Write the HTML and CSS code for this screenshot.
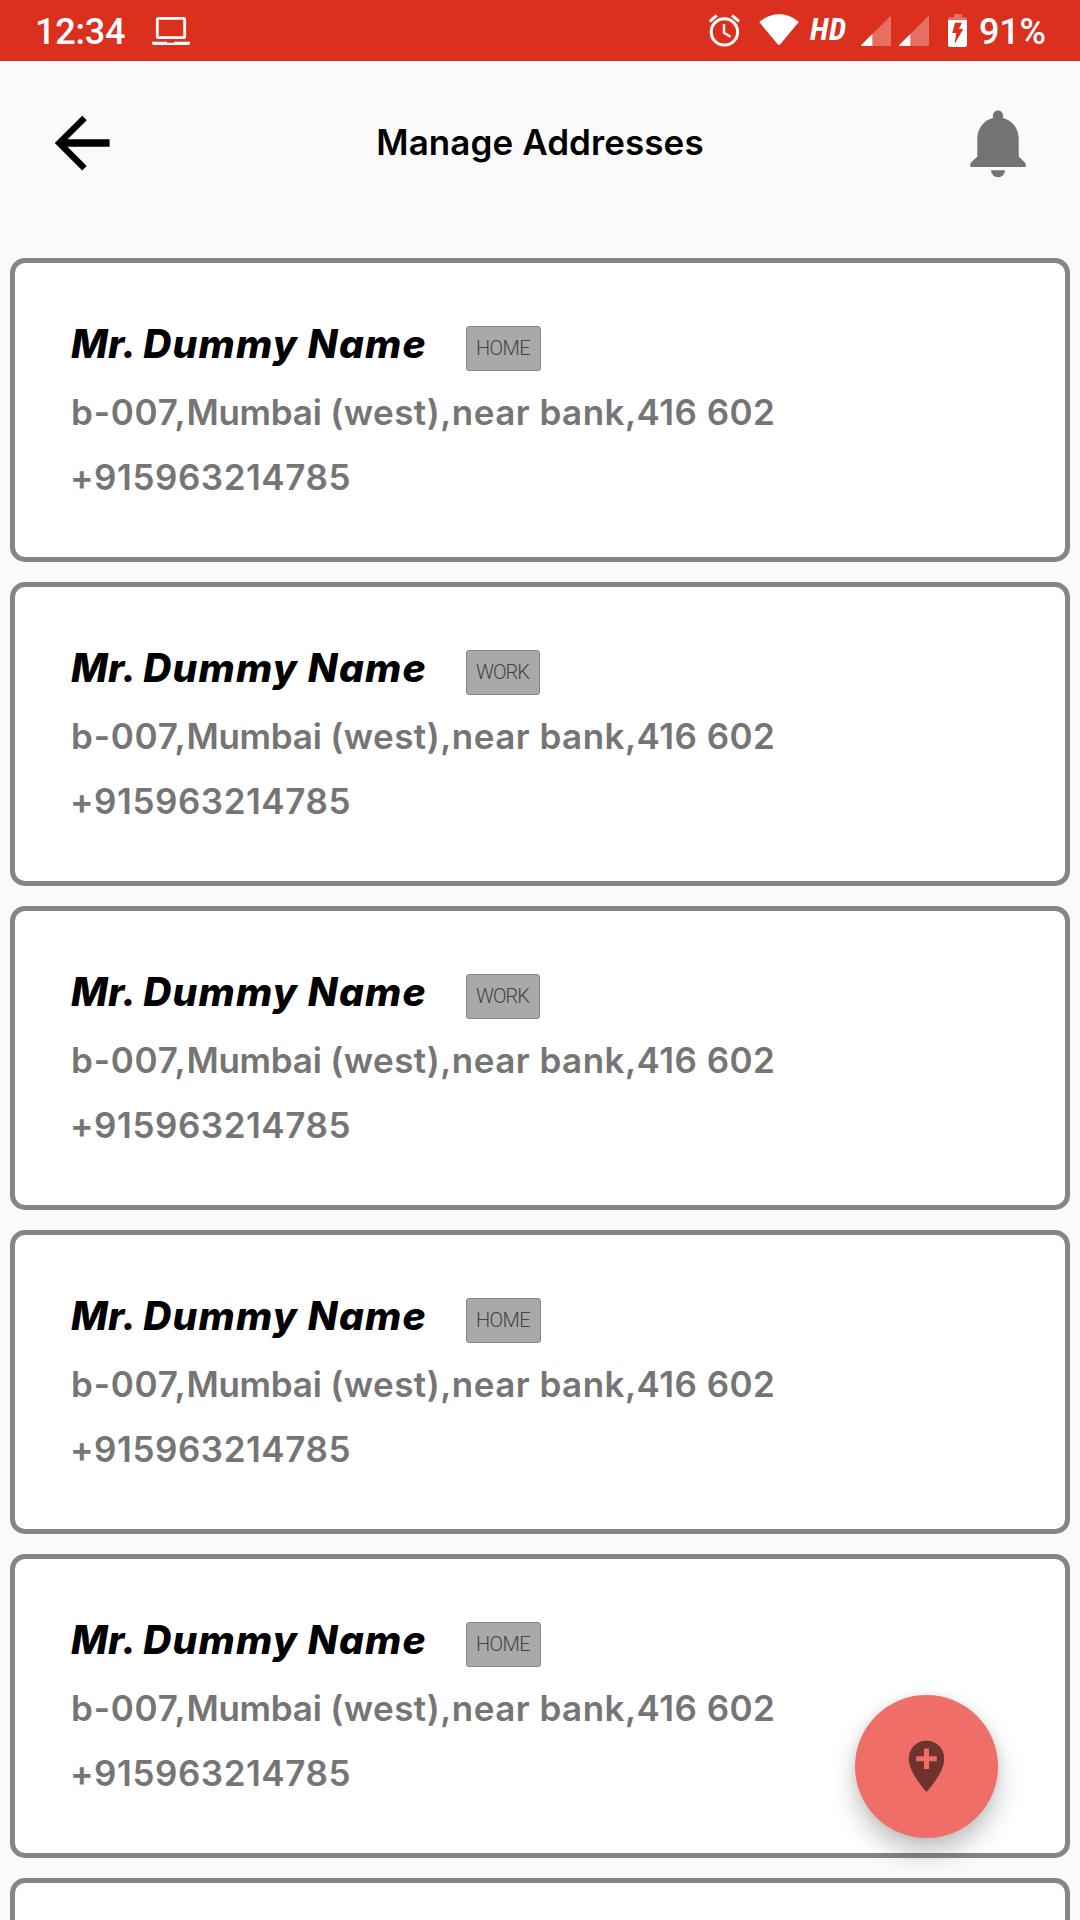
FILE: index.html
```html
<!DOCTYPE html>
<html lang="en">
<head>
<meta charset="utf-8">
<title>Manage Addresses</title>
<link rel="stylesheet" href="styles.css">
</head>
<body>
<div class="status-bar">
  <span class="clock">12:34</span>
  <svg class="laptop" viewBox="152 14 38 34" width="38" height="34"><rect x="157.3" y="18.3" width="27.4" height="19.4" rx="1.5" fill="none" stroke="#fff" stroke-width="2.8"/><path d="M152 41.7h15v1h7v-1h16v1.3q0 2-2 2h-34q-2 0-2-2z" fill="#fff"/></svg>
  <div class="indicators">
    <svg class="alarm" viewBox="708 13 34 35" width="34" height="35" fill="none" stroke="#fff"><circle cx="724.4" cy="31.9" r="13.2" stroke-width="3"/><path d="M724 24v8.8l6.6 4" stroke-width="2.4"/><path d="M709.8 21.3l7-5.9M739 21.3l-7-5.9" stroke-width="3"/></svg>
    <svg class="wifi" viewBox="759 13 40 35" width="40" height="35"><path d="M759.2 22.1C770.5 11.500 787.500 11.500 798.800 22.100L780.500 44Q779 45.800 777.500 44Z" fill="#fff"/></svg>
    <span class="hd">HD</span>
    <svg class="signal" viewBox="0 0 30 30" width="30" height="30"><path d="M0 29.500L28.500 .7Q30-.5 30 1.500V28.500Q30 30 28.500 30H1Q0 30 0 29.500Z" fill="#e76f62"/><path d="M0 29.200L11.300 18V30H1Q0 30 0 29.200Z" fill="#fff"/></svg>
    <svg class="signal" viewBox="0 0 30 30" width="30" height="30"><path d="M0 29.500L28.500 .7Q30-.5 30 1.500V28.500Q30 30 28.500 30H1Q0 30 0 29.500Z" fill="#e76f62"/><path d="M0 29.200L11.300 18V30H1Q0 30 0 29.200Z" fill="#fff"/></svg>
    <svg class="battery" viewBox="948 14 19 33" width="19" height="33"><path d="M954 14h8v3.300h3q2 0 2 2v1h-19v-1q0-2 2-2h4z" fill="#e76f62"/><path d="M948 20h19v25q0 2-2 2h-15q-2 0-2-2z" fill="#fff"/><path d="M955 22.700h7l-3 6.300h4.300l-8.800 15 1.700-11h-3.900z" fill="#dc301f"/></svg>
    <span class="percent">91%</span>
  </div>
</div>
<header class="app-bar">
  <svg class="back" viewBox="54 115 56 56" width="56" height="56" fill="none" stroke="#000"><path d="M84.500 118L59.300 143.100 84.500 168.200" stroke-width="6.400"/><path d="M60 143h49.600" stroke-width="7.400"/></svg>
  <h1 class="title">Manage Addresses</h1>
  <svg class="bell" viewBox="970 109 56 69" width="56" height="69" fill="#737373"><path d="M992.900 118v-2.500a5.100 5.100 0 0 1 10.200 0v2.500C1012.500 120.500 1018.700 128.500 1018.700 139v17.500l6.900 6.700v3.900h-55.200v-3.900l6.900-6.700V139C977.300 128.500 983.500 120.500 992.900 118Z"/><path d="M991 170.200h14a7 7 0 0 1-14 0Z"/></svg>
</header>
<main class="list">
  <article class="card">
    <div class="heading"><h2 class="name"><span class="prefix">Mr. </span>Dummy Name</h2><span class="tag">HOME</span></div>
    <p class="line"><span class="unit">b-007,</span><span class="city">Mumbai </span>(west),near bank,416 602</p>
    <p class="line phone">+915963214785</p>
  </article>
  <article class="card">
    <div class="heading"><h2 class="name"><span class="prefix">Mr. </span>Dummy Name</h2><span class="tag work">WORK</span></div>
    <p class="line"><span class="unit">b-007,</span><span class="city">Mumbai </span>(west),near bank,416 602</p>
    <p class="line phone">+915963214785</p>
  </article>
  <article class="card">
    <div class="heading"><h2 class="name"><span class="prefix">Mr. </span>Dummy Name</h2><span class="tag work">WORK</span></div>
    <p class="line"><span class="unit">b-007,</span><span class="city">Mumbai </span>(west),near bank,416 602</p>
    <p class="line phone">+915963214785</p>
  </article>
  <article class="card">
    <div class="heading"><h2 class="name"><span class="prefix">Mr. </span>Dummy Name</h2><span class="tag">HOME</span></div>
    <p class="line"><span class="unit">b-007,</span><span class="city">Mumbai </span>(west),near bank,416 602</p>
    <p class="line phone">+915963214785</p>
  </article>
  <article class="card">
    <div class="heading"><h2 class="name"><span class="prefix">Mr. </span>Dummy Name</h2><span class="tag">HOME</span></div>
    <p class="line"><span class="unit">b-007,</span><span class="city">Mumbai </span>(west),near bank,416 602</p>
    <p class="line phone">+915963214785</p>
  </article>
  <article class="card partial"></article>
</main>
<button class="fab" aria-label="Add address">
  <svg viewBox="908 1740 37 53" width="37" height="53"><path d="M926.500 1740.800C916.500 1740.800 908.800 1748.500 908.800 1758.500 908.800 1770 918 1782 926.500 1792 935 1782 944.200 1770 944.200 1758.500 944.200 1748.500 936.500 1740.800 926.500 1740.800Z" fill="#6e322f"/><path d="M926.500 1748.500v20.600M916.200 1758.800h20.600" stroke="#ef6e67" stroke-width="5"/></svg>
</button>
</body>
</html>
```
FILE: styles.css
```css
* {
  box-sizing: border-box;
}

body {
  margin: 0;
  height: 1920px;
  overflow: hidden;
  background: #fafafa;
  font-family: Inter, sans-serif;
}

h1, h2, p {
  margin: 0;
}

svg {
  display: block;
  flex: none;
}

/* Status bar */
.status-bar {
  display: flex;
  align-items: flex-start;
  height: 61px;
  padding: 0 34px 0 35px;
  background: #dc301f;
  color: #fff;
  font: 500 36px/65px Roboto, sans-serif;
}

.clock {
  width: 117px;
  letter-spacing: -0.2px;
}

.laptop {
  margin-top: 14px;
}

.indicators {
  display: flex;
  margin-left: auto;
}

.alarm {
  margin-top: 13px;
}

.wifi {
  margin: 13px 11px 0 17px;
}

.hd {
  width: 51px;
  font: italic 700 31px/60px "Roboto Condensed", Roboto, sans-serif;
  letter-spacing: 0.6px;
}

.signal {
  margin: 16px 8px 0 0;
}

.battery {
  margin: 14px 12px 0 11px;
}

.percent {
  width: 67px;
  letter-spacing: -0.2px;
}

/* App bar */
.app-bar {
  display: flex;
  align-items: center;
  justify-content: space-between;
  height: 164px;
  margin-bottom: 33px;
  padding: 0 54px;
}

.title {
  padding-bottom: 2px;
  font-size: 35px;
  font-weight: 600;
  letter-spacing: 0.08px;
}

/* Address cards */
.list {
  display: flex;
  flex-direction: column;
  gap: 20px;
  padding: 0 10px;
}

.card {
  flex: none;
  height: 304px;
  padding: 58px 55px 0;
  border: 5px solid #858585;
  border-radius: 15px;
  background: #fff;
}

.partial {
  height: 42px;
  padding: 0;
  border-bottom: 0;
  border-radius: 15px 15px 0 0;
}

.heading {
  display: flex;
  height: 59px;
}

.name {
  width: 396px;
  padding-left: 1px;
  font-size: 39px;
  font-style: italic;
  font-weight: 800;
  line-height: 46px;
  letter-spacing: 1.25px;
  white-space: nowrap;
}

.prefix {
  letter-spacing: 0.2px;
}

.tag {
  width: 75px;
  height: 45px;
  margin-top: 5px;
  padding-left: 9px;
  border: 1px solid #858585;
  border-radius: 3px;
  background: #a9a9a9;
  color: #444;
  font: 300 20px/43px Roboto, sans-serif;
  letter-spacing: -0.6px;
}

.work {
  width: 74px;
  letter-spacing: -1px;
}

.line {
  padding-left: 1px;
  color: #757575;
  font-size: 35px;
  font-weight: 600;
  line-height: 65px;
  letter-spacing: 0.47px;
  white-space: nowrap;
}

.unit {
  letter-spacing: 0.8px;
}

.city {
  letter-spacing: -0.25px;
}

.phone {
  padding-left: 0;
  letter-spacing: 0.55px;
}

/* Floating action button */
.fab {
  position: absolute;
  left: 855px;
  top: 1695px;
  display: flex;
  align-items: center;
  justify-content: center;
  width: 143px;
  height: 143px;
  padding: 0;
  border: 0;
  border-radius: 50%;
  background: #ef6e67;
  box-shadow: 0 14px 26px rgba(0, 0, 0, 0.24), 0 0 8px rgba(0, 0, 0, 0.08);
}
```
